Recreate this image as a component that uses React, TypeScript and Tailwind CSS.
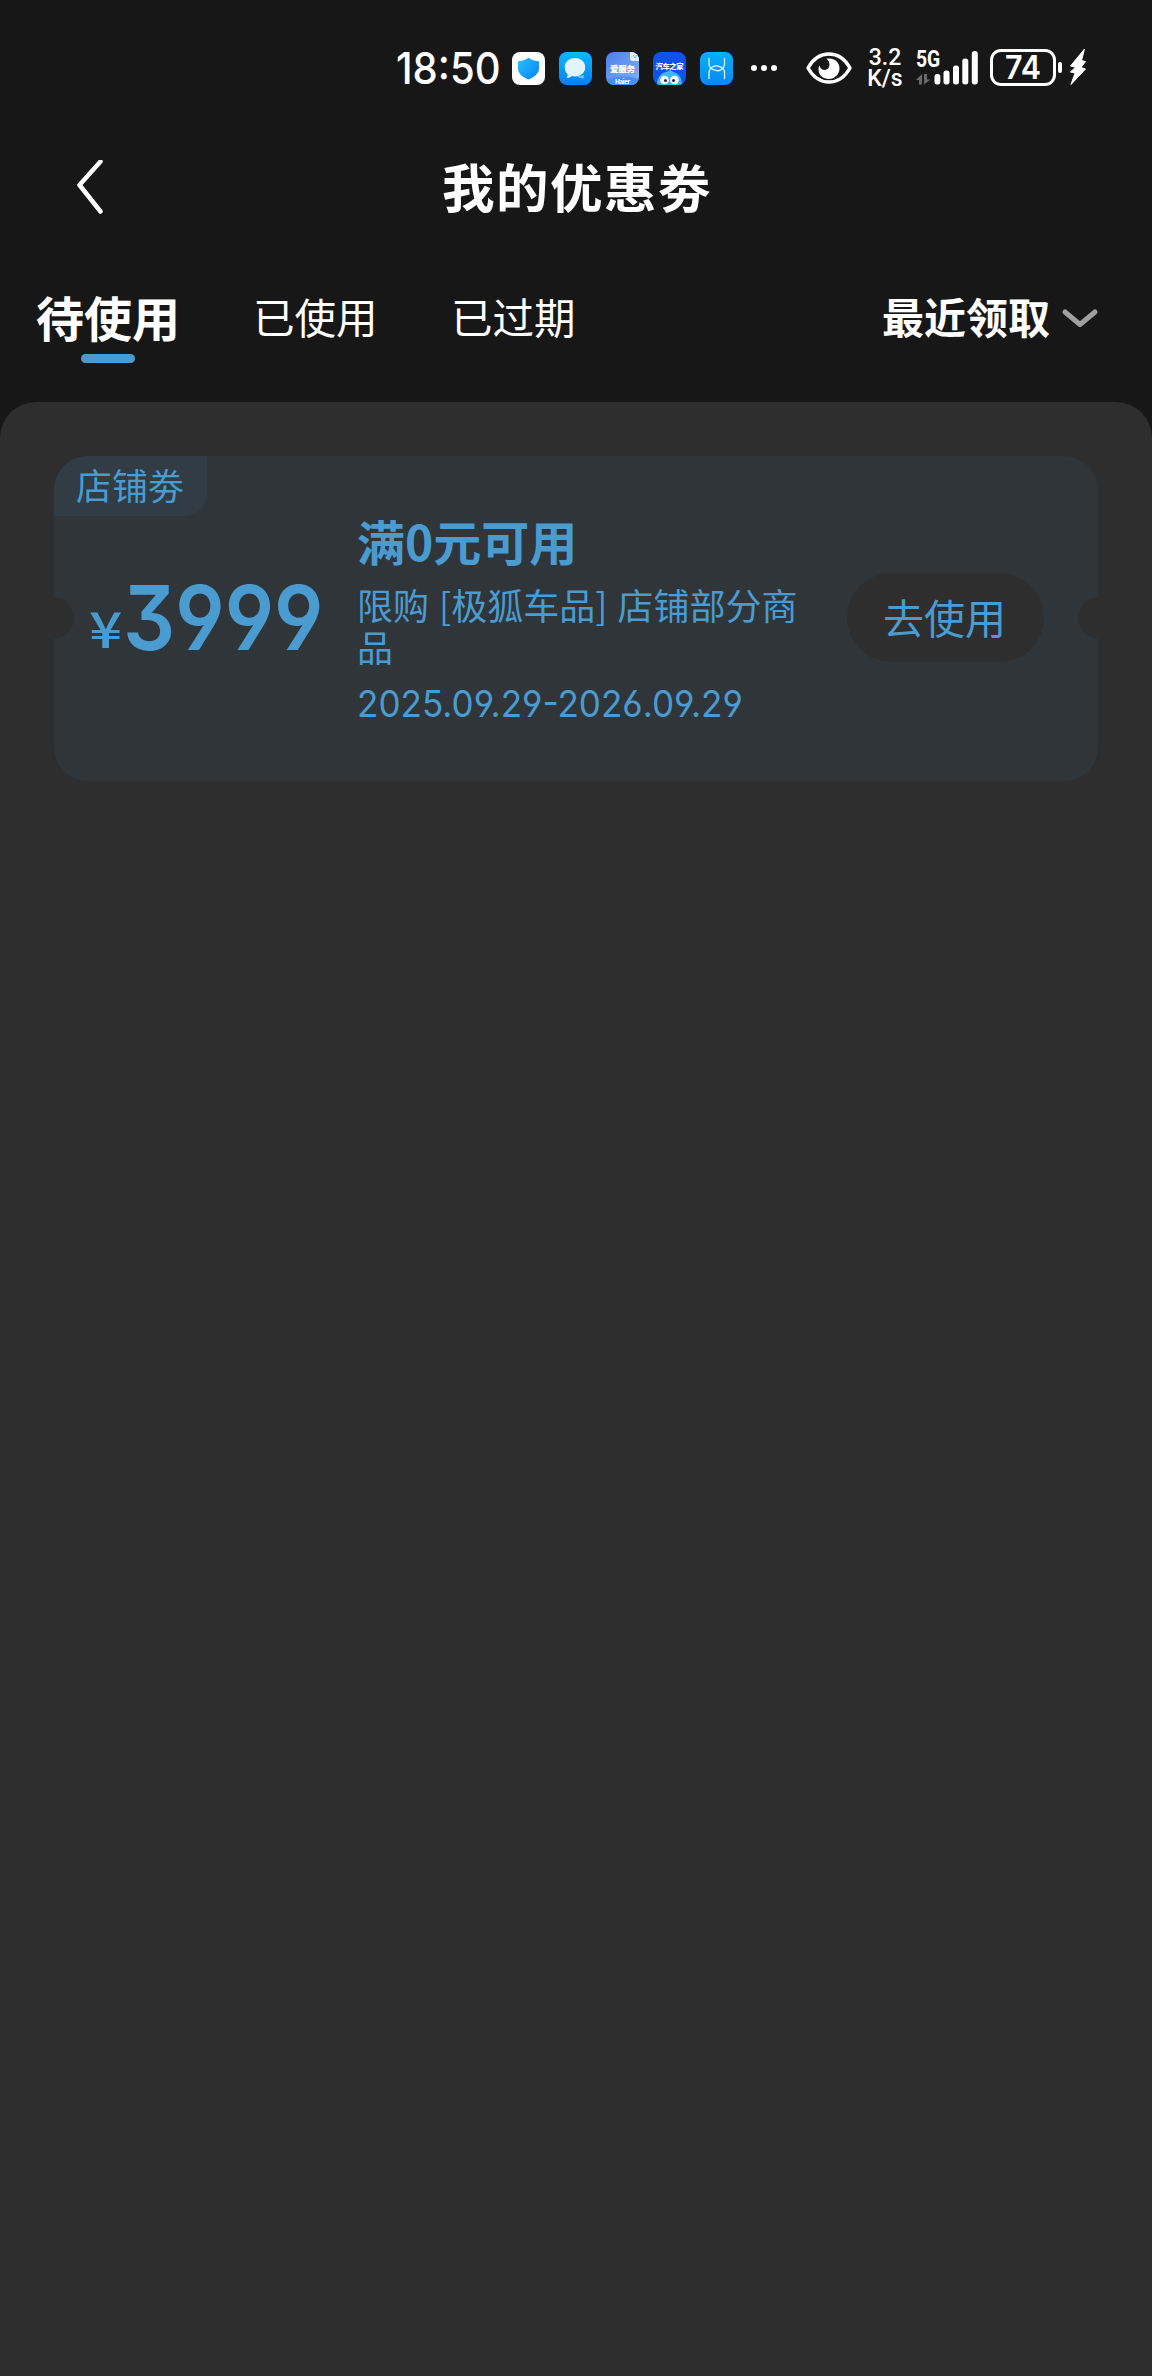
import type { ReactNode } from "react";

const TABS = ["待使用", "已使用", "已过期"];

const AppIcon = ({ children }: { children: ReactNode }) => (
  <svg className="h-[33px] w-[33px]" viewBox="0 0 33 33">
    {children}
  </svg>
);

const ShieldIcon = () => (
  <AppIcon>
    <defs>
      <linearGradient id="shield" x1="0" y1="0" x2="1" y2="1">
        <stop offset="0" stopColor="#25c4fb" />
        <stop offset="1" stopColor="#0a80f8" />
      </linearGradient>
    </defs>
    <rect width="33" height="33" rx="8" fill="#fff" />
    <path d="M16.500 5.500c3 2.600 6.500 3.600 10.500 3.800v7c0 5-4 8.700-10.500 11.200C10 25 6 21.300 6 16.300v-7c4-.2 7.500-1.200 10.500-3.800z" fill="url(#shield)" />
  </AppIcon>
);

const ChatIcon = () => (
  <AppIcon>
    <defs>
      <linearGradient id="chat" x1="0" y1="0" x2="0" y2="1">
        <stop offset="0" stopColor="#0bb9fb" />
        <stop offset="1" stopColor="#077ff5" />
      </linearGradient>
    </defs>
    <rect width="33" height="33" rx="8" fill="url(#chat)" />
    <path d="M18 24.500c2 1.500 4.500 2 7.500 1.800-.8-1-.9-2-.6-3.300z" fill="#6cc3fb" />
    <path d="M16 6c6 0 10.200 4 10.200 9.200s-4.200 9.300-10.200 9.300c-1 0-2-.1-2.900-.4-1.500 1.300-3.300 1.900-5.600 1.900 1-1.200 1.300-2.500 1-4-1.700-1.700-2.700-4-2.700-6.800C5.800 10 10 6 16 6z" fill="#e3f4ff" />
  </AppIcon>
);

const HaierIcon = () => (
  <AppIcon>
    <defs>
      <linearGradient id="haier" x1="0" y1="0" x2="1" y2="1">
        <stop offset="0" stopColor="#4e7fea" />
        <stop offset="1" stopColor="#82b2fa" />
      </linearGradient>
      <clipPath id="haierClip">
        <rect width="33" height="33" rx="8" />
      </clipPath>
    </defs>
    <g clipPath="url(#haierClip)">
      <rect width="33" height="33" fill="url(#haier)" />
      <path d="M0 28c8-4 22-5 33-1v6H0z" fill="#4b8df2" />
      <path d="M24 0h9v9h-6a3 3 0 0 1-3-3z" fill="#e9f1ff" />
      <path d="M27 3l2 3M30 3v3" stroke="#7fa9f0" />
      <text x="4" y="19.500" fontSize="8.500" fontWeight="900" fill="#fff" textLength="25">爱服务</text>
      <text x="9" y="32" fontSize="6.500" fontWeight="700" fill="#fff" textLength="15">Haier</text>
    </g>
  </AppIcon>
);

const AutohomeIcon = () => (
  <AppIcon>
    <defs>
      <clipPath id="autoClip">
        <rect width="33" height="33" rx="8" />
      </clipPath>
    </defs>
    <g clipPath="url(#autoClip)">
      <rect width="33" height="33" fill="#0f52ea" />
      <path d="M4 33c0-8 4-12 9-13 2-.5 3-1.500 4.500-2.500.5 1.200 1.500 2 3 2.500 5 1.500 8.500 5 8.500 13z" fill="#3db8ee" />
      <circle cx="11.500" cy="28" r="4.300" fill="#fff" />
      <circle cx="21.500" cy="28" r="4.300" fill="#fff" />
      <circle cx="12.500" cy="28.500" r="1.500" fill="#16304f" />
      <circle cx="20.500" cy="28.500" r="1.500" fill="#16304f" />
      <text x="2.500" y="16.500" fontSize="7.300" fontWeight="900" fill="#fff" textLength="28">汽车之家</text>
    </g>
  </AppIcon>
);

const LinkIcon = () => (
  <AppIcon>
    <defs>
      <linearGradient id="link" x1="0" y1="0" x2="0" y2="1">
        <stop offset="0" stopColor="#06b0fb" />
        <stop offset="1" stopColor="#0a88f5" />
      </linearGradient>
    </defs>
    <rect width="33" height="33" rx="8" fill="url(#link)" />
    <g fill="none" stroke="#e2f6ff" strokeWidth="1.300" strokeLinecap="round">
      <path d="M9 6.500v5c0 3 1.500 5 4.500 6.200 3 1.200 6.500 1.200 8-.2 1.800-1.600 3-3 3-5v-6" />
      <path d="M9 26.500v-5.500c0-2.500 1-4.500 3-5.800 2.500-1.600 6-1.600 8.500-.4 2.800 1.300 4 3.200 4 5.700v6" />
    </g>
  </AppIcon>
);

const EyeIcon = () => (
  <svg className="h-[32px] w-[46px]" viewBox="0 0 46 32">
    <path d="M2 16C7 7 14 2 23 2s16 5 21 14c-5 9-12 14-21 14S7 25 2 16z" fill="none" stroke="#fff" strokeWidth="3.400" strokeLinejoin="round" />
    <path d="M23 6.500c6 0 10.500 4 10.500 9.800S29 27 23 27s-10.500-4-10.500-9.800c0-1.500.3-2.700.8-3.800 1 3 3 4.600 5.200 4.600 3 0 5-2.300 5-5.200 0-2.600-1-4.500-3-6 .8-.2 1.600-.3 2.500-.3z" fill="#fff" />
  </svg>
);

const SignalIcon = () => (
  <svg className="h-[36px] w-[62px]" viewBox="0 0 62 36">
    <g fill="#6a6a6a">
      <path d="M0 30l6-6v10.500H3V30z" />
      <path d="M8 24h3v5.500h3.500L8 34.500z" />
    </g>
    <g fill="#fff">
      <rect x="18.500" y="24" width="5.800" height="10.500" rx="2.500" />
      <rect x="27.500" y="20.500" width="6" height="14" rx="2.700" />
      <rect x="37" y="15.500" width="6" height="19" rx="2.700" />
      <rect x="46.300" y="8.500" width="6" height="26" rx="2.700" />
      <rect x="55.800" y="1" width="6" height="33.500" rx="2.700" />
    </g>
  </svg>
);

const BoltIcon = () => (
  <svg className="h-[38px] w-[18px]" viewBox="0 0 18 38">
    <path d="M15.500 1L1.500 18l5 1.300L1.500 24l4.500 1L2 36.500 16.500 21l-4.500-1.500 4.500-6-4-1z" fill="#fff" stroke="#fff" strokeLinejoin="round" />
  </svg>
);

const StatusBar = () => (
  <div className="flex h-[136px] items-start pl-[396px] pt-[48px]">
    <div className="h-[40px] w-[116px]">
      <span className="inline-block origin-left scale-x-[0.91] whitespace-nowrap font-[Inter] text-[44px] font-medium leading-[40px]">18:50</span>
    </div>
    <div className="mt-[4px] flex gap-[14px]">
      <ShieldIcon />
      <ChatIcon />
      <HaierIcon />
      <AutohomeIcon />
      <LinkIcon />
    </div>
    <div className="ml-[18px] mt-[17px] flex gap-[4px]">
      <i className="h-[6px] w-[6px] rounded-full bg-white" />
      <i className="h-[6px] w-[6px] rounded-full bg-white" />
      <i className="h-[6px] w-[6px] rounded-full bg-white" />
    </div>
    <div className="ml-[29px] mt-[4px]">
      <EyeIcon />
    </div>
    <div className="-mt-[1px] ml-[14px] w-[38px] text-center font-[Roboto] text-[23px] font-medium leading-[21px]">
      <div>3.2</div>
      <div>K/s</div>
    </div>
    <div className="relative ml-[12px] mt-[2px]">
      <SignalIcon />
      <span className="absolute left-0 top-0 origin-left scale-x-[0.84] font-[Roboto] text-[23px] font-bold leading-[20px]">5G</span>
    </div>
    <div className="ml-[12px] mt-[1px] flex h-[37px] w-[66px] items-center justify-center rounded-[11px] border-[3px] border-white font-[Inter] text-[32px] font-semibold leading-none">
      <span className="scale-x-[0.95]">74</span>
    </div>
    <i className="ml-[2px] mt-[14px] h-[11px] w-[4px] rounded-full bg-white" />
    <div className="ml-[7px]">
      <BoltIcon />
    </div>
  </div>
);

const Coupon = () => (
  <div className="relative flex h-[325px] w-[1044px] overflow-hidden rounded-[34px] bg-[#303539] text-[#4a9bd0]">
    <i className="absolute -left-[22px] top-[141px] h-[42px] w-[42px] rounded-full bg-[#2e2e2e]" />
    <i className="absolute -right-[22px] top-[141px] h-[42px] w-[42px] rounded-full bg-[#2e2e2e]" />

    <div className="w-[303px]">
      <div className="h-[60px] w-[153px] rounded-br-[22px] bg-[#313c45] pl-[22px] text-[36px] leading-[56px]">店铺劵</div>
      <div className="mt-[62px] flex h-[80px] items-start pl-[35px]">
        <span className="mt-[8px] inline-block w-[34px] origin-left scale-x-[1.17] text-[50px] font-medium leading-[80px]">¥</span>
        <span className="inline-block origin-left scale-x-[0.91] font-[Inter] text-[90px] font-semibold leading-[80px] [font-feature-settings:'cv03','cv04','cv09']">
          3999
        </span>
      </div>
    </div>

    <div className="w-[490px] pt-[57px]">
      <h2 className="text-[48px] font-bold leading-[54px]">满0元可用</h2>
      <p className="mt-[16px] w-[450px] text-[36px] leading-[42px] [word-spacing:2px]">限购 [极狐车品] 店铺部分商品</p>
      <div className="mt-[17px] origin-left scale-x-[0.948] whitespace-nowrap font-[Inter] text-[37px] leading-[40px] [font-feature-settings:'cv03','cv04','cv09']">
        2025.09.29-2026.09.29
      </div>
    </div>

    <button className="mt-[117px] h-[89px] w-[197px] rounded-full bg-[#2e2e2e] pb-[3px] pr-[2px] text-[41px] leading-[86px]">去使用</button>
  </div>
);

export default function App() {
  return (
    <div className="flex h-[2376px] w-[1152px] flex-col overflow-hidden bg-[#171717] font-['Noto_Sans_CJK_SC',sans-serif] text-white">
      <StatusBar />

      <header className="flex h-[104px] items-center">
        <svg className="ml-[76px] h-[56px] w-[28px]" viewBox="0 0 28 56" fill="none" stroke="#fff" strokeWidth="4.500" strokeLinecap="round" strokeLinejoin="round">
          <path d="M24.500 1.500L3.500 25l21 26.500" />
        </svg>
        <h1 className="ml-[338px] pb-[7px] text-[52.500px] font-bold leading-[60px] tracking-[1.500px]">我的优惠劵</h1>
      </header>

      <nav className="flex h-[162px] items-start pl-[36px] pt-[46px]">
        <div className="flex w-[217px] flex-col">
          <span className="text-[48px] font-bold leading-[60px]">{TABS[0]}</span>
          <i className="ml-[45px] mt-[8px] h-[9px] w-[54px] rounded-full bg-[#4a9bd0]" />
        </div>
        <span className="w-[198px] text-[41.500px] leading-[60px]">{TABS[1]}</span>
        <span className="w-[431px] text-[41.500px] leading-[60px]">{TABS[2]}</span>
        <span className="text-[42px] font-bold leading-[60px]">最近领取</span>
        <svg className="ml-[11px] mt-[22px] h-[20px] w-[38px]" viewBox="0 0 38 20" fill="none" stroke="#a0a0a0" strokeWidth="5" strokeLinecap="round" strokeLinejoin="round">
          <path d="M4 4l15 12.500L34 4" />
        </svg>
      </nav>

      <main className="flex-1 rounded-t-[36px] bg-[#2e2e2e] px-[54px] pt-[54px]">
        <Coupon />
      </main>
    </div>
  );
}
